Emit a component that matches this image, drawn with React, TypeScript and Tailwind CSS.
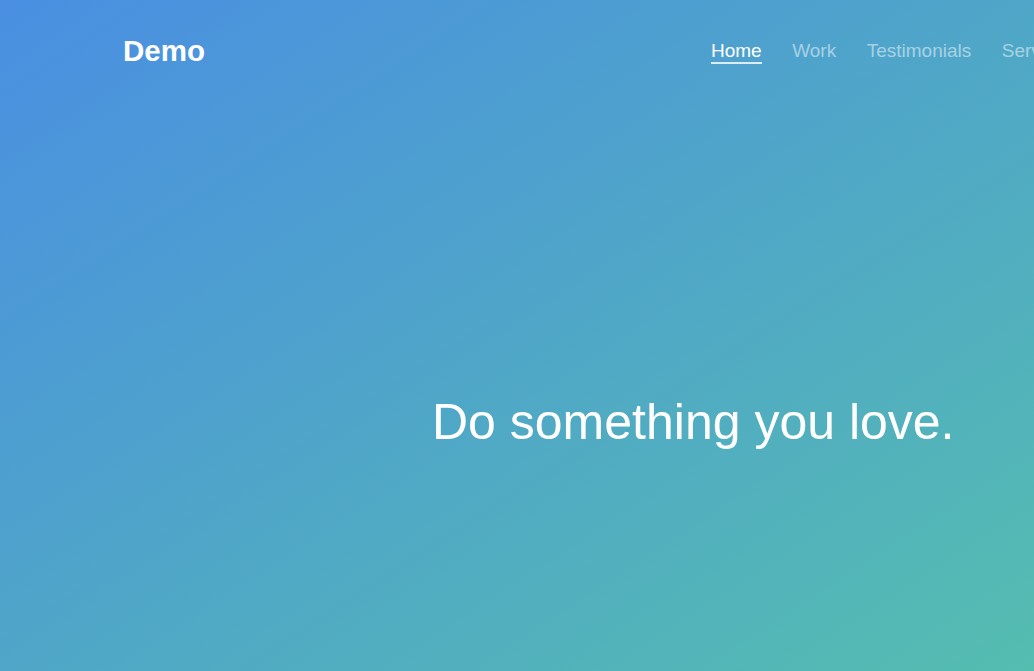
import React from "react";

export default function App() {
  const nav = ["Home", "Work", "Testimonials", "Services", "Contact"];
  return (
    <div
      className="w-full h-[671px] overflow-hidden flex flex-col bg-[linear-gradient(to_bottom_right,#4a8fe2_0%,#4fa6c8_50%,#55bdb0_100%)] text-white"
      style={{ fontFamily: '"Liberation Sans", Arial, sans-serif' }}
    >
      <header className="flex items-start pt-[35px] pl-[123px] whitespace-nowrap">
        <div className="w-[588px] shrink-0 text-[29.5px] leading-[32px] font-bold">Demo</div>
        <nav className="mt-[4px] flex gap-[30.5px] text-[19px] leading-[23px] shrink-0">
          {nav.map((n, i) => (
            <a
              key={n}
              className={
                i === 0
                  ? "text-white border-b-2 border-white/80"
                  : "text-white/50"
              }
            >
              {n}
            </a>
          ))}
        </nav>
      </header>
      <main className="pl-[432px] mt-[325px]">
        <h1 className="text-[50px] leading-[60px] font-normal whitespace-nowrap">
          Do something you love.
        </h1>
      </main>
    </div>
  );
}
